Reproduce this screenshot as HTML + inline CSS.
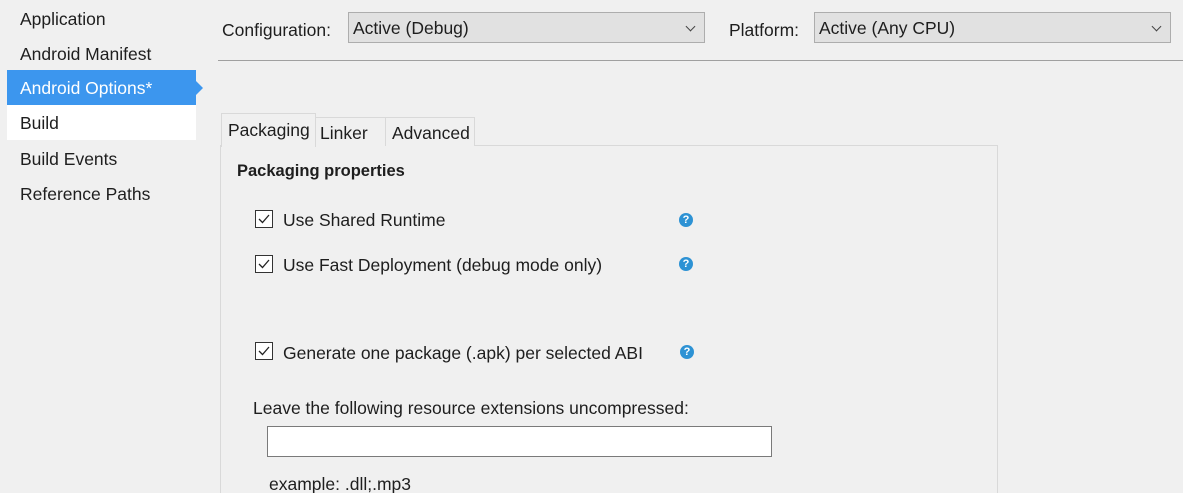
<!DOCTYPE html>
<html style="overflow:hidden"><head><style>
html,body{overflow:hidden}
body{margin:0;width:1183px;height:493px;background:#f0f0f0;font-family:"Liberation Sans",sans-serif;font-size:17.5px;color:#1e1e1e;position:relative;overflow:hidden}
.a{position:absolute;white-space:nowrap}
.nav{left:7px;width:189px;height:35px;line-height:36px;padding-left:13px;box-sizing:border-box}
.sel{background:#3c96ee;color:#fff}
.wh{background:#fff}
.combo{position:absolute;height:31px;top:12px;background:#e1e1e1;border:1px solid #adadad;box-sizing:border-box;line-height:31px;padding-left:4px}
.chev{position:absolute;right:10px;top:10px;width:6px;height:6px;border-right:1px solid #444;border-bottom:1px solid #444;transform:rotate(45deg)}
.cb{position:absolute;width:18px;height:18px;border:1px solid #333;box-sizing:border-box;background:#fff}
.cb svg{position:absolute;left:1px;top:1px}
.q{position:absolute;width:14px;height:14px;border-radius:50%;background:#2d92d4;color:#fff;font-size:11px;font-weight:bold;text-align:center;line-height:14px}
.tab{position:absolute;border:1px solid #d9d9d9;border-bottom:none;box-sizing:border-box;background:#f0f0f0;padding-left:6px}
</style></head><body>
<div class="a nav" style="top:1px">Application</div>
<div class="a nav" style="top:36px">Android Manifest</div>
<div class="a nav sel" style="top:70px">Android Options*</div>
<div class="a" style="left:196px;top:81px;width:0;height:0;border-top:7px solid transparent;border-bottom:7px solid transparent;border-left:7px solid #3c96ee"></div>
<div class="a nav wh" style="top:105px">Build</div>
<div class="a nav" style="top:141px">Build Events</div>
<div class="a nav" style="top:176px">Reference Paths</div>

<div class="a" style="left:222px;top:20px">Configuration:</div>
<div class="combo" style="left:348px;width:357px">Active (Debug)<div class="chev"></div></div>
<div class="a" style="left:729px;top:20px">Platform:</div>
<div class="combo" style="left:814px;width:357px">Active (Any CPU)<div class="chev"></div></div>
<div class="a" style="left:218px;top:60px;width:965px;height:1px;background:#a0a0a0"></div>

<div class="a" style="left:220px;top:145px;width:778px;height:360px;border:1px solid #d9d9d9;box-sizing:border-box;background:#f0f0f0"></div>
<div class="tab" style="left:385px;top:117px;width:90px;height:29px;line-height:30px">Advanced</div>
<div class="tab" style="left:315px;top:117px;width:71px;height:29px;line-height:30px;padding-left:4px">Linker</div>
<div class="tab" style="left:221px;top:113px;width:95px;height:34px;line-height:33px;background:#f0f0f0">Packaging</div>

<div class="a" style="left:237px;top:162px;font-weight:bold;font-size:16.5px">Packaging properties</div>

<div class="cb" style="left:255px;top:210px"><svg width="14" height="14"><path d="M2 7 L5.5 10.5 L12 3" fill="none" stroke="#222" stroke-width="1.3"/></svg></div>
<div class="a" style="left:283px;top:210px">Use Shared Runtime</div>
<div class="q" style="left:679px;top:213px">?</div>

<div class="cb" style="left:255px;top:255px"><svg width="14" height="14"><path d="M2 7 L5.5 10.5 L12 3" fill="none" stroke="#222" stroke-width="1.3"/></svg></div>
<div class="a" style="left:283px;top:255px">Use Fast Deployment (debug mode only)</div>
<div class="q" style="left:679px;top:257px">?</div>

<div class="cb" style="left:255px;top:342px"><svg width="14" height="14"><path d="M2 7 L5.5 10.5 L12 3" fill="none" stroke="#222" stroke-width="1.3"/></svg></div>
<div class="a" style="left:283px;top:343px">Generate one package (.apk) per selected ABI</div>
<div class="q" style="left:680px;top:345px">?</div>

<div class="a" style="left:253px;top:398px">Leave the following resource extensions uncompressed:</div>
<div class="a" style="left:267px;top:426px;width:505px;height:31px;background:#fff;border:1px solid #7a7a7a;box-sizing:border-box"></div>
<div class="a" style="left:269px;top:474px">example: .dll;.mp3</div>
</body></html>
